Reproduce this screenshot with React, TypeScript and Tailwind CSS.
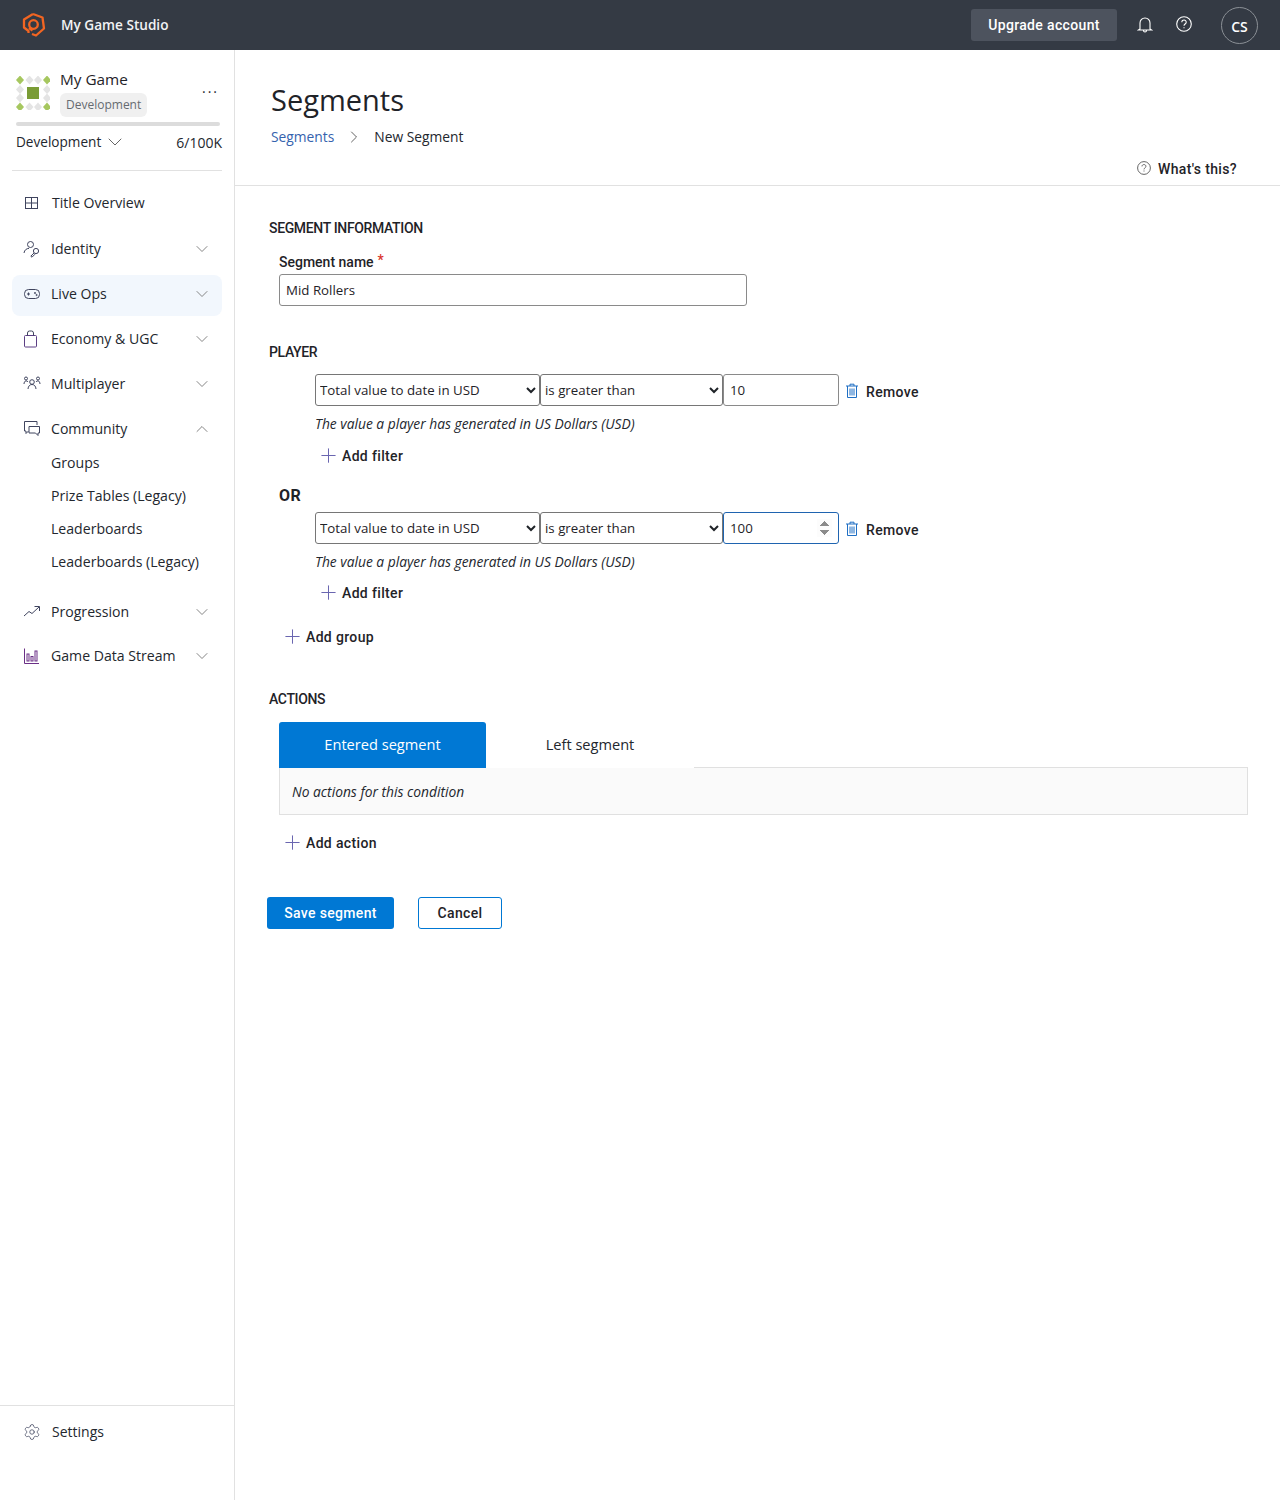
import React from "react";
import { ChevronDown, ChevronUp, ChevronRight, Plus, Settings } from "lucide-react";

const Din = "font-['Roboto',sans-serif] font-medium tracking-[0.025em]";

const IconBox = ({ children }: { children: React.ReactNode }) => (
  <svg width="18" height="18" viewBox="0 0 18 18" fill="none" stroke="#3f445e" strokeWidth="1" className="shrink-0">
    {children}
  </svg>
);

const GridIcon = () => (
  <IconBox>
    <rect x="2.5" y="3.5" width="12" height="11" /><path d="M8.5 3.5v11M2.5 9h12" />
  </IconBox>
);
const IdentityIcon = () => (
  <IconBox>
    <circle cx="7.5" cy="4.5" r="3" /><path d="M1 13c.4-3 2.600-4.600 5-4.600" />
    <circle cx="13" cy="11" r="2.600" /><path d="M11 13l-3.200 3.200 1.200 1 3-3" />
  </IconBox>
);
const GamepadIcon = () => (
  <IconBox>
    <rect x="1.5" y="4.5" width="15" height="9" rx="4" /><path d="M4 9h3M5.5 7.500v3" />
    <circle cx="12" cy="8" r=".6" /><circle cx="13.600" cy="10" r=".6" />
  </IconBox>
);
const BagIcon = () => (
  <IconBox>
    <rect x="1.500" y="5.500" width="12" height="11.500" rx="1" stroke="#5c3f84" /><path d="M4.500 5.500V3a2 2 0 0 1 2-2h2a2 2 0 0 1 2 2v2.500" />
  </IconBox>
);
const MultiIcon = () => (
  <IconBox>
    <circle cx="9" cy="7" r="2.300" /><path d="M5 14c.2-2.800 1.800-4.500 4-4.500s3.800 1.700 4 4.500" />
    <circle cx="3" cy="3.500" r="1.500" /><path d="M1 9c0-1.500.8-3 2-3.200 1 0 1.600.5 2 1.200" />
    <circle cx="15" cy="3.500" r="1.500" /><path d="M17 9c0-1.500-.8-3-2-3.200-1 0-1.600.5-2 1.200" />
  </IconBox>
);
const ChatIcon = () => (
  <IconBox>
    <path d="M14 5V1.500H1.500v9.500h1.500v2.500L5.500 11" />
    <path d="M6 6.500h10.500V13h-1.500v2.500L12.500 13H6z" />
  </IconBox>
);
const TrendIcon = () => (
  <IconBox>
    <path d="M1 13l5-4.500 3 2 7-6.500M11.500 3.500H16.500V8" />
  </IconBox>
);
const BarsIcon = () => (
  <svg width="18" height="18" viewBox="0 0 18 18" fill="none" stroke="#6a2f86" strokeWidth="1" className="shrink-0">
    <path d="M1.500 1.500V16.500H16" /><rect x="4" y="7" width="2" height="7" /><rect x="8" y="9.500" width="2" height="4.500" /><rect x="12" y="4" width="2" height="10" />
  </svg>
);
const TrashIcon = () => (
  <svg width="14" height="16" viewBox="0 0 14 16" fill="none" stroke="#1f6fc4" strokeWidth="1" className="shrink-0">
    <path d="M1 3h12M5 3V1.200h4V3M2.500 3v11.500h9V3M5 5.500v7M7 5.500v7M9 5.500v7" />
  </svg>
);
const Hex = () => (
  <svg width="24" height="26" viewBox="0 0 24 26" fill="none" stroke="#f26522" strokeWidth="2.300" strokeLinejoin="round">
    <path d="M11 2l9.500 3.500 1.500 11-8 7-4-1.500" />
    <path d="M6.500 21V19L2 15.500V7.500L11 2" />
    <circle cx="11.500" cy="12.500" r="4.300" />
    <path d="M7 16l3.500 2.500" />
  </svg>
);

const GameLogo = () => {
  const p = [2, 11.500, 20, 29];
  const ds: React.ReactNode[] = [];
  p.forEach((x, i) =>
    p.forEach((y, j) => {
      const edge = i === 0 || i === 3 || j === 0 || j === 3;
      if (!edge) return;
      const corner = (i === 0 || i === 3) && (j === 0 || j === 3);
      ds.push(
        <path
          key={`${i}-${j}`}
          d={`M${x + 2} ${y - 2.500}l4 4.500-4 4.500-4-4.500z`}
          fill={corner ? "#a6c75f" : "#e4e4e4"}
        />
      );
    })
  );
  return (
    <svg width="34" height="34" viewBox="0 0 34 34" className="shrink-0">
      {ds}
      <rect x="11" y="11" width="12" height="12" fill="#7a9c35" />
    </svg>
  );
};

function NavItem({
  icon, label, open, active, className = "", noChevron,
}: { icon: React.ReactNode; label: string; open?: boolean; active?: boolean; className?: string; noChevron?: boolean }) {
  return (
    <div className={`flex h-[41px] items-center rounded-lg pl-[11px] pr-[10px] ${noChevron ? "pb-[2px]" : "pb-[4px]"} ${active ? "bg-[#f2f7fd]" : ""} ${className}`}>
      <span className={`flex shrink-0 ${noChevron ? "w-[29px]" : "w-[28px]"}`}>{icon}</span>
      <span className="flex-1 text-[14.100px] text-[#23272e]">{label}</span>
      {!noChevron &&
        (open ? (
          <ChevronUp size={20} strokeWidth={1.100} className="text-[#7a7a7a]" />
        ) : (
          <ChevronDown size={20} strokeWidth={1.100} className="text-[#7a7a7a]" />
        ))}
    </div>
  );
}

const Sub = ({ label }: { label: string }) => (
  <div className="flex h-[33px] items-center pl-[39px] text-[14.100px] text-[#23272e]">{label}</div>
);

function AddLink({ label, className = "" }: { label: string; className?: string }) {
  return (
    <div className={`flex h-5 items-center ${className}`}>
      <Plus size={23} strokeWidth={1.050} className="mr-[2px] -mt-[2px] text-[#6a66b0]" />
      <span className={`${Din} text-[14px] text-[#1f2328]`}>{label}</span>
    </div>
  );
}

function FilterRow({ value, focused }: { value: string; focused?: boolean }) {
  const cls = "h-8 rounded-[3px] border border-[#767676] bg-white text-[13.300px] text-[#1f2328]";
  return (
    <div className="flex h-8 items-center">
      <select defaultValue="a" className={`${cls} w-[225px]`}>
        <option value="a">Total value to date in USD</option>
      </select>
      <select defaultValue="b" className={`${cls} w-[183px]`}>
        <option value="b">is greater than</option>
      </select>
      <input
        type="number"
        defaultValue={value}
        className={`h-8 w-[116px] rounded-[3px] border bg-white px-[6px] text-[13.300px] text-[#1f2328] outline-none ${
          focused ? "border-[#1f64b0] [&::-webkit-inner-spin-button]:opacity-100" : "border-[#8a8a8a] [&::-webkit-inner-spin-button]:opacity-0"
        }`}
      />
      <span className="ml-[6px] mt-[1px] flex"><TrashIcon /></span>
      <span className={`${Din} ml-[7px] mt-[4px] text-[14px] text-[#1f2328]`}>Remove</span>
    </div>
  );
}

const Note = ({ className = "" }: { className?: string }) => (
  <div className={`flex h-5 items-center text-[13.800px] italic text-[#23272e] ${className}`}>
    The value a player has generated in US Dollars (USD)
  </div>
);

const SectionTitle = ({ children, className = "" }: { children: React.ReactNode; className?: string }) => (
  <div className={`flex h-5 items-center pl-[34px] font-['Roboto',sans-serif] text-[14px] font-medium tracking-[-0.025em] text-[#1f2328] ${className}`}>{children}</div>
);

export default function App() {
  return (
    <div className="flex h-[1500px] w-[1280px] flex-col overflow-hidden bg-white font-['Open_Sans',sans-serif]">
      <header className="flex h-[50px] shrink-0 items-center bg-[#343a44]">
        <span className="ml-[22px] flex"><Hex /></span>
        <span className="ml-[15px] text-[13.600px] font-semibold text-[#f1f3f5]">My Game Studio</span>
        <div className="ml-auto flex items-center">
          <div className={`${Din} flex h-8 w-[146px] items-center justify-center rounded-[3px] bg-[#4d535e] text-[14px] font-bold text-white`}>
            Upgrade account
          </div>
          <svg width="16" height="18" viewBox="0 0 16 18" fill="none" stroke="#fff" strokeWidth="1.100" className="ml-5">
            <path d="M3 13V7a5 5 0 0 1 10 0v6l1.500 1h-13zM6.500 14.500c0 2 3 2 3 0" />
          </svg>
          <svg width="16" height="16" viewBox="0 0 16 16" fill="none" stroke="#fff" strokeWidth="1.100" className="ml-[23px] -mt-[2px]">
            <circle cx="8" cy="8" r="7.300" /><path d="M5.800 6.200c0-3 4.500-2.800 4.400 0 0 1.800-2.200 1.800-2.200 3.600" /><path d="M8 11.300v1" />
          </svg>
          <div className="ml-[29px] mr-[22px] flex h-[37px] w-[37px] items-center justify-center rounded-full border border-[#8b9096] pt-[2px] text-[14px] font-semibold text-white">
            CS
          </div>
        </div>
      </header>

      <div className="flex flex-1">
        <aside className="flex w-[235px] shrink-0 flex-col border-r border-[#e1e1e1]">
          <div className="px-[16px] pt-[17px]">
            <div className="flex">
              <div className="mt-[9px]"><GameLogo /></div>
              <div className="ml-[10px] flex-1">
                <div className="h-[24px] text-[15.300px] font-medium leading-[25px] text-[#1f2328]">My Game</div>
                <span className="inline-flex h-6 items-center rounded-md bg-[#f0f0f0] px-[6px] text-[12px] text-[#666b70]">Development</span>
              </div>
              <span className="-mr-[1px] mt-[14px] text-[14px] leading-none tracking-[2px] text-[#23272e]">...</span>
            </div>
            <div className="mt-[5px] h-1 w-[204px] rounded-full bg-[#dcdcdc]" />
            <div className="mt-[5px] flex h-[22px] items-center text-[13.600px] text-[#23272e]">
              <span className="font-medium">Development</span>
              <ChevronDown size={24} strokeWidth={0.9} className="-my-2 ml-[2px] text-[#555]" />
              <span className="-mr-[4px] ml-auto text-[14px]">6/100K</span>
            </div>
          </div>
          <div className="mx-[12px] mt-[17px] h-px bg-[#e1e1e1]" />
          <nav className="mx-[12px] mt-[12px]">
            <NavItem icon={<GridIcon />} label="Title Overview" noChevron />
            <NavItem icon={<IdentityIcon />} label="Identity" className="mt-[6px]" />
            <NavItem icon={<GamepadIcon />} label="Live Ops" active className="mt-[4px]" />
            <NavItem icon={<BagIcon />} label="Economy & UGC" className="mt-[4px]" />
            <NavItem icon={<MultiIcon />} label="Multiplayer" className="mt-[4px]" />
            <NavItem icon={<ChatIcon />} label="Community" open className="mt-[4px]" />
            <div className="-mt-[5px]">
              <Sub label="Groups" />
              <Sub label="Prize Tables (Legacy)" />
              <Sub label="Leaderboards" />
              <Sub label="Leaderboards (Legacy)" />
            </div>
            <NavItem icon={<TrendIcon />} label="Progression" className="mt-[15px]" />
            <NavItem icon={<BarsIcon />} label="Game Data Stream" className="mt-[3px]" />
          </nav>
          <div className="mt-auto mb-[45px] flex h-[50px] items-center border-t border-[#e1e1e1] pl-[23px] pt-[2px] text-[14px] text-[#23272e]">
            <Settings size={18} strokeWidth={1} className="mr-[11px] text-[#3f445e]" />
            Settings
          </div>
        </aside>

        <main className="flex-1">
          <div className="h-[136px] border-b border-[#e1e1e1] px-[36px]">
            <h1 className="pt-[30px] text-[29px] leading-[40px] text-[#1f2328]">Segments</h1>
            <div className="mt-[7px] flex h-5 items-center text-[13.800px]">
              <span className="text-[#3563ae]">Segments</span>
              <ChevronRight size={20} strokeWidth={1} className="ml-[10px] text-[#444]" />
              <span className="ml-[10px] text-[#23272e]">New Segment</span>
            </div>
            <div className="mr-[7px] mt-[12px] flex h-5 items-center justify-end">
              <svg width="14" height="14" viewBox="0 0 14 14" fill="none" stroke="#555" strokeWidth="0.900" className="-mt-[2px] mr-[7px]">
                <circle cx="7" cy="7" r="6.400" /><path d="M5 5.400c0-2.500 4-2.400 3.900 0 0 1.500-1.900 1.500-1.900 3" /><path d="M7 9.500v1" />
              </svg>
              <span className={`${Din} text-[14px] text-[#1f2328]`}>What's this?</span>
            </div>
          </div>

          <div className="pt-[32px]">
            <SectionTitle>SEGMENT INFORMATION</SectionTitle>
            <div className="ml-[44px] mt-[14px] flex h-5 items-center font-['Roboto',sans-serif] text-[14px] font-medium text-[#1f2328]">
              Segment name<span className="ml-[4px] -mt-[4px] text-[#d9342b]">*</span>
            </div>
            <input
              defaultValue="Mid Rollers"
              className="ml-[44px] mt-[2px] block h-8 w-[468px] rounded-[3px] border border-[#8a8a8a] px-[6px] text-[13.300px] text-[#1f2328] outline-none"
            />

            <SectionTitle className="mt-[36px]">PLAYER</SectionTitle>
            <div className="ml-[80px] mt-[12px]">
              <FilterRow value="10" />
              <Note className="mt-[8px]" />
            </div>
            <AddLink label="Add filter" className="ml-[82px] mt-[12px]" />
            <div className="ml-[44px] mt-[20px] flex h-5 items-center font-['Roboto',sans-serif] text-[16px] font-bold tracking-[0.03em] text-[#1f2328]">OR</div>
            <div className="ml-[80px] mt-[6px]">
              <FilterRow value="100" focused />
              <Note className="mt-[8px]" />
            </div>
            <AddLink label="Add filter" className="ml-[82px] mt-[11px]" />
            <AddLink label="Add group" className="ml-[46px] mt-[24px]" />

            <SectionTitle className="mt-[42px]">ACTIONS</SectionTitle>
            <div className="relative z-10 ml-[44px] mt-[13px] flex h-[46px] w-[415px] text-[14.600px]">
              <div className="flex w-[207px] items-center justify-center rounded-t-[3px] bg-[#0078d4] text-white">Entered segment</div>
              <div className="flex w-[208px] items-center justify-center bg-white text-[#23272e]">Left segment</div>
            </div>
            <div className="ml-[44px] -mt-px flex h-[48px] w-[969px] items-center border border-[#e0e0e0] bg-[#fafafa] pl-[12px] pt-[2px] text-[13.800px] italic text-[#23272e]">
              No actions for this condition
            </div>
            <AddLink label="Add action" className="ml-[46px] mt-[18px]" />
            <div className="ml-[32px] mt-[44px] flex">
              <div className={`${Din} flex h-8 w-[127px] items-center justify-center rounded-[3px] bg-[#0078d4] text-[14px] font-bold text-white`}>Save segment</div>
              <div className={`${Din} ml-[24px] flex h-8 w-[84px] items-center justify-center rounded-[3px] border border-[#0078d4] bg-white text-[14px] text-[#1f2328]`}>Cancel</div>
            </div>
          </div>
        </main>
      </div>
    </div>
  );
}
